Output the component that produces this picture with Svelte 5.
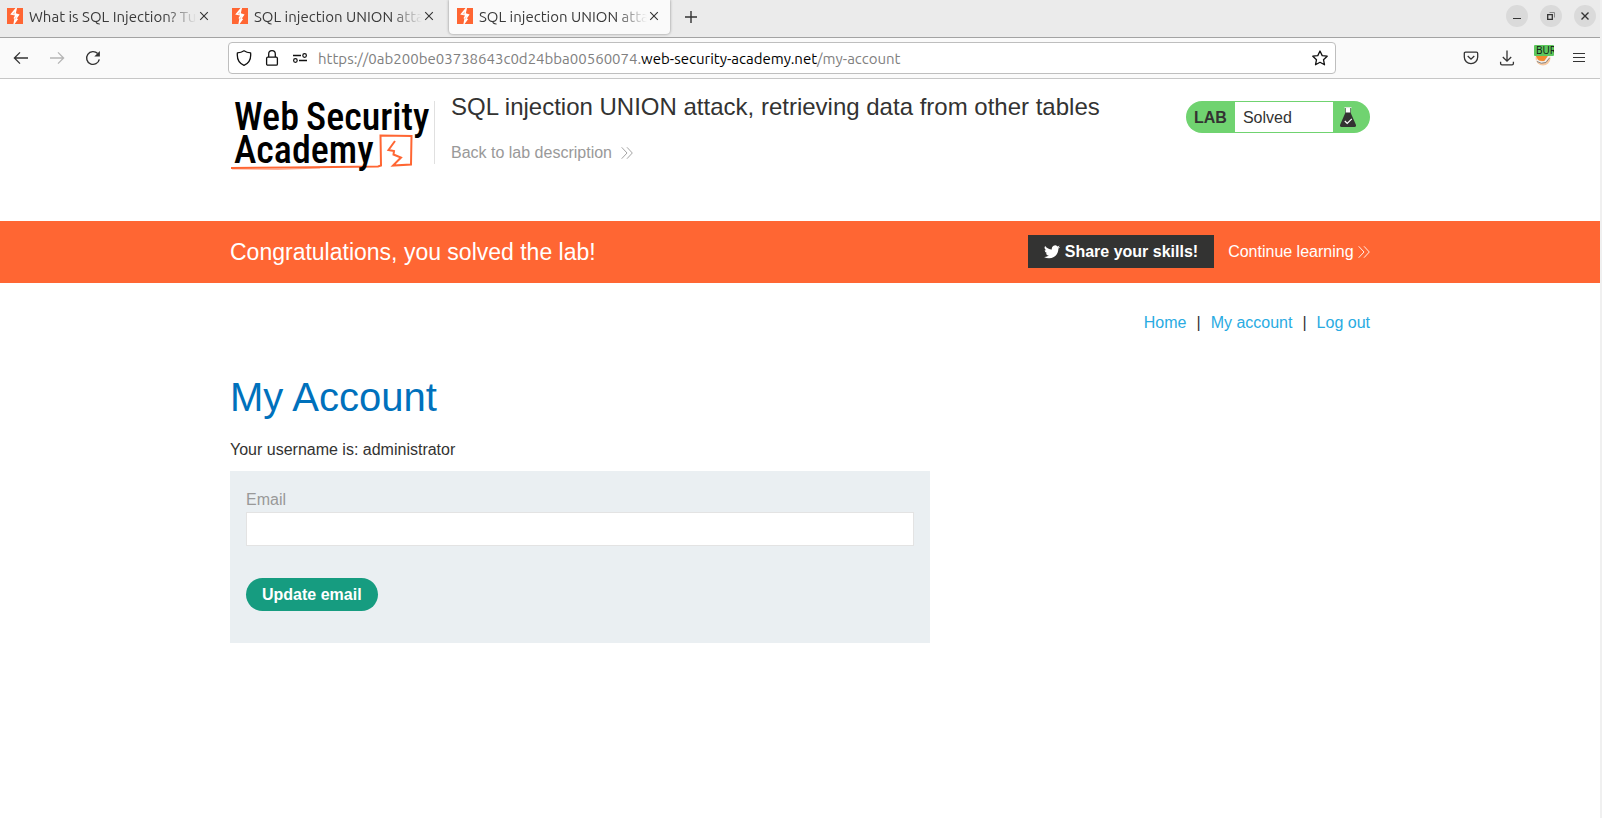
<script>
  const tabs = [
    { title: 'What is SQL Injection? Tutorial', active: false },
    { title: 'SQL injection UNION attack', active: false },
    { title: 'SQL injection UNION attack', active: true }
  ];
  let email = $state('');
</script>

{#snippet chevrons()}
  <svg class="chevrons" width="12" height="12" viewBox="0 0 12 12" aria-hidden="true">
    <path d="M0.7 0.3 6 6 0.7 11.7M6 0.3 11.3 6 6 11.7" fill="none" stroke="currentColor" stroke-width="0.9" />
  </svg>
{/snippet}

<div class="window">
  <div class="tabbar">
    <div class="tabs">
      {#each tabs as tab}
        <div class="tab" class:active={tab.active}>
          <svg width="16" height="16" viewBox="0 0 16 16" aria-hidden="true">
            <rect width="16" height="16" fill="#ff6633" />
            <path d="M8.6 0H10L8.8 5.2 12.6 6.6 9.8 10.6 11.2 11 7.6 16H6.4L7.4 10.6 6.4 10.2 8 7.4 3.2 6.4Z" fill="#fff" />
            <path d="M5.4 5.9 8 3.6 7.4 6.6ZM8 10.2 9.4 8 8.8 11.8Z" fill="#ff6633" opacity=".4" />
          </svg>
          <span class="tab-title">{tab.title}</span>
          <button class="close" aria-label="Close tab">
            <svg width="10" height="10" viewBox="0 0 10 10"><path d="M1.2 1.2 8.8 8.8M8.8 1.2 1.2 8.8" stroke="#333" stroke-width="1.1" /></svg>
          </button>
        </div>
      {/each}
      <button class="newtab" aria-label="New tab">
        <svg width="14" height="14" viewBox="0 0 14 14"><path d="M7 1V13M1 7H13" stroke="#333" stroke-width="1.4" /></svg>
      </button>
    </div>
    <div class="controls">
      <button aria-label="Minimize"><svg width="22" height="22" viewBox="0 0 22 22"><path d="M7 13.5H15" stroke="#333" /></svg></button>
      <button aria-label="Restore"><svg width="22" height="22" viewBox="0 0 22 22"><path d="M7.7 9.7H12.3V14.3H7.7Z" fill="none" stroke="#333" stroke-width="1.3" /><path d="M9.5 7.5H14.5V12.5" fill="none" stroke="#888" /></svg></button>
      <button aria-label="Close"><svg width="22" height="22" viewBox="0 0 22 22"><path d="M7.5 7.5 14.5 14.5M14.5 7.5 7.5 14.5" stroke="#333" stroke-width="1.4" /></svg></button>
    </div>
  </div>

  <div class="toolbar">
    <div class="nav-buttons">
      <button aria-label="Back"><svg width="16" height="16" viewBox="0 0 16 16"><path d="M15 8H1.5M7 2.4 1.4 8 7 13.6" fill="none" stroke="#333" stroke-width="1.3" /></svg></button>
      <button aria-label="Forward" disabled><svg width="16" height="16" viewBox="0 0 16 16"><path d="M1 8H14.5M9 2.4 14.6 8 9 13.6" fill="none" stroke="#b5b5b5" stroke-width="1.3" /></svg></button>
      <button aria-label="Reload"><svg width="16" height="16" viewBox="0 0 16 16"><path d="M14.3 9.3A6.4 6.4 0 1 1 12.7 3.6" fill="none" stroke="#333" stroke-width="1.4" /><path d="M14.9 1V6.6H9.3Z" fill="#333" /></svg></button>
    </div>
    <div class="urlbar">
      <svg width="16" height="16" viewBox="0 0 16 16" aria-hidden="true"><path d="M8 .8C10 2.2 12.3 2.8 14.6 2.9 15.2 8.5 12.8 13.3 8 15.3 3.2 13.3 .8 8.5 1.4 2.9 3.7 2.8 6 2.2 8 .8Z" fill="none" stroke="#111" stroke-width="1.3" stroke-linejoin="round" /></svg>
      <svg width="16" height="16" viewBox="0 0 16 16" aria-hidden="true"><rect x="2.6" y="7.2" width="10.8" height="8" rx="1.2" fill="none" stroke="#111" stroke-width="1.3" /><path d="M4.7 7V4A3.3 3.3 0 0 1 11.3 4V7" fill="none" stroke="#111" stroke-width="1.3" /></svg>
      <svg width="16" height="16" viewBox="0 0 16 16" aria-hidden="true"><path d="M1 5.5H9M7 10.5H15" stroke="#111" stroke-width="1.3" /><circle cx="12.6" cy="5.5" r="1.8" fill="none" stroke="#111" stroke-width="1.2" /><circle cx="3.4" cy="10.5" r="1.8" fill="none" stroke="#111" stroke-width="1.2" /></svg>
      <span class="url">https://0ab200be03738643c0d24bba00560074.<b>web-security-academy.net</b>/my-account</span>
      <button aria-label="Bookmark this page"><svg width="16" height="16" viewBox="0 0 16 16"><path d="M8 1 10.2 5.6 15.2 6.2 11.5 9.7 12.5 14.8 8 12.3 3.5 14.8 4.5 9.7 .8 6.2 5.8 5.6Z" fill="none" stroke="#111" stroke-width="1.3" stroke-linejoin="round" /></svg></button>
    </div>
    <div class="tools">
      <button aria-label="Save to Pocket"><svg width="16" height="16" viewBox="0 0 16 16"><path d="M2.6 2.2H13.4Q14.7 2.2 14.7 3.5V7A6.7 6.7 0 0 1 1.3 7V3.5Q1.3 2.2 2.6 2.2Z" fill="none" stroke="#333" stroke-width="1.3" /><path d="M4.7 6 8 9.2 11.3 6" fill="none" stroke="#333" stroke-width="1.3" /></svg></button>
      <button aria-label="Downloads"><svg width="16" height="16" viewBox="0 0 16 16"><path d="M8 .5V11M3.8 7 8 11.2 12.2 7M1.6 11.8V13.4Q1.6 14.8 3 14.8H13Q14.4 14.8 14.4 13.4V11.8" fill="none" stroke="#333" stroke-width="1.3" /></svg></button>
      <button class="proxy" aria-label="Proxy switcher">
        <svg width="18" height="18" viewBox="0 0 18 18"><circle cx="9" cy="9" r="7.5" fill="#f8c9a0" /><path d="M2 7 9 5.5 15 8 12 12.500 4.500 11.500Z" fill="#f28a2e" /><path d="M2.500 11Q6 14.500 11 12.500L15.500 6.500" fill="none" stroke="#eee" stroke-width="1.8" /><path d="M3 12.500Q7 15.500 12 13.500L15.500 9" fill="none" stroke="#8b8580" /></svg>
        <span class="badge">BUR</span>
      </button>
      <button aria-label="Menu"><svg width="16" height="16" viewBox="0 0 16 16"><path d="M2 3.5H14M2 7.5H14M2 11.5H14" stroke="#333" stroke-width="1.2" /></svg></button>
    </div>
  </div>

  <main>
    <header class="container lab-header">
      <svg class="logo" width="204" height="76" viewBox="0 0 204 76" role="img" aria-label="Web Security Academy">
        <path d="M1 67 60 66.5 148 65.5 151 64.5 150.500 34.500 181.500 35 181 63.500 163 64.500 171 56.500 163.500 53.500 164 50 158.500 49 165 40" fill="none" stroke="#ff6633" stroke-width="2" />
        <path d="M2 68 48 68.500 90 67" fill="none" stroke="#ff6633" stroke-opacity=".5" />
        <g class="logo-text">
          <text x="4" y="29">Web</text>
          <text x="76" y="29">Security</text>
          <text x="4" y="62">Academy</text>
        </g>
      </svg>
      <div class="lab-title">
        <h2>SQL injection UNION attack, retrieving data from other tables</h2>
        <a class="back" href="#lab">Back to lab description {@render chevrons()}</a>
      </div>
      <div class="status">
        <strong>LAB</strong>
        <span>Solved</span>
        <svg width="16" height="20" viewBox="0 0 16 20" aria-hidden="true">
          <path d="M5.5 1H10.5V6H5.5Z" fill="#fff" />
          <path d="M4.5 .7H11.5" stroke="#eee" />
          <path d="M5.5 1V6M10.5 1V6" stroke="#555" stroke-width=".7" />
          <path d="M5.5 5.5H10.5L16 18Q16.2 20 14.5 20H1.5Q-.2 20 0 18Z" fill="#333332" />
          <path d="M4.8 14 7.2 16.4 11.8 11.8" fill="none" stroke="#fff" stroke-width="1.2" />
        </svg>
      </div>
    </header>

    <section class="banner">
      <div class="container banner-inner">
        <h4>Congratulations, you solved the lab!</h4>
        <button class="share">
          <svg width="16" height="14" viewBox="0 0 24 20" aria-hidden="true"><path d="M24 2.37a9.8 9.8 0 0 1-2.83.78A4.93 4.93 0 0 0 23.34.42a9.9 9.9 0 0 1-3.13 1.2 4.92 4.92 0 0 0-8.38 4.48A13.98 13.98 0 0 1 1.67.95a4.92 4.92 0 0 0 1.52 6.57A4.9 4.9 0 0 1 .96 6.9a4.93 4.93 0 0 0 3.95 4.89 4.9 4.9 0 0 1-2.22.08 4.93 4.93 0 0 0 4.6 3.42A9.87 9.87 0 0 1 0 17.33a13.94 13.94 0 0 0 7.55 2.21c9.05 0 14-7.5 14-14v-.64A10 10 0 0 0 24 2.37z" fill="#fff" /></svg>
          Share your skills!
        </button>
        <a class="continue" href="#continue">Continue learning {@render chevrons()}</a>
      </div>
    </section>

    <div class="container">
      <nav class="links">
        <a href="#home">Home</a><span>|</span><a href="#account">My account</a><span>|</span><a href="#logout">Log out</a>
      </nav>
      <h1>My Account</h1>
      <p>Your username is: administrator</p>
      <form onsubmit={(e) => e.preventDefault()}>
        <label for="email">Email</label>
        <input id="email" type="email" bind:value={email} />
        <button type="submit">Update email</button>
      </form>
    </div>
  </main>
</div>

<style>
  :global(body) {
    margin: 0;
    background: #fff;
  }
  .window {
    box-sizing: border-box;
    min-height: 100vh;
    border-right: 2px solid #f0f0f0;
    font-family: "Liberation Sans", Arial, sans-serif;
    font-size: 16px;
    line-height: 20px;
    color: #333332;
  }
  button {
    border: 0;
    padding: 0;
    background: none;
    font: inherit;
    color: inherit;
    display: flex;
    align-items: center;
    justify-content: center;
  }
  svg {
    flex: none;
  }
  a {
    text-decoration: none;
  }
  .tabbar {
    display: flex;
    justify-content: space-between;
    height: 37px;
    background: #ebebeb;
    border-bottom: 1px solid #a3a3a3;
    font-family: Ubuntu, "Noto Sans", sans-serif;
    font-size: 15px;
  }
  .tabs {
    display: flex;
    gap: 4px;
    margin-left: -1px;
  }
  .tab {
    box-sizing: border-box;
    display: flex;
    align-items: center;
    width: 221px;
    height: 34px;
    padding: 0 9px 2px 8px;
    border-radius: 0 0 4px 4px;
  }
  .tab.active {
    background: #fafafa;
    box-shadow: 0 0 3px #888;
  }
  .tab-title {
    flex: 1;
    min-width: 0;
    margin-left: 6px;
    padding-top: 2px;
    overflow: hidden;
    white-space: nowrap;
    color: #3a3a3a;
    mask-image: linear-gradient(to left, transparent, #000 32px);
  }
  .close {
    width: 14px;
    height: 16px;
  }
  .newtab {
    width: 34px;
    height: 33px;
  }
  .controls {
    display: flex;
    align-items: center;
    gap: 12px;
    padding: 0 4px 5px 0;
  }
  .controls button {
    width: 22px;
    height: 22px;
    border-radius: 50%;
    background: #dadada;
  }
  .toolbar {
    display: flex;
    align-items: center;
    height: 40px;
    background: #fafafa;
    border-bottom: 1px solid #c6c6c6;
  }
  .nav-buttons {
    display: flex;
    gap: 20px;
    flex: 0 0 215px;
    padding-left: 13px;
  }
  .urlbar {
    box-sizing: border-box;
    display: flex;
    align-items: center;
    flex: 1;
    gap: 12px;
    height: 32px;
    padding: 0 7px;
    background: #fff;
    border: 1px solid #bebebe;
    border-radius: 4px;
    font-family: Ubuntu, "Noto Sans", sans-serif;
    font-size: 15px;
  }
  .url {
    flex: 1;
    margin-left: -2px;
    padding-top: 2px;
    color: #808080;
    white-space: nowrap;
  }
  .url b {
    font-weight: 400;
    color: #000;
  }
  .tools {
    display: flex;
    align-items: center;
    justify-content: flex-end;
    gap: 20px;
    flex: 0 0 251px;
    padding-right: 13px;
  }
  .proxy {
    position: relative;
    width: 16px;
  }
  .badge {
    position: absolute;
    left: -1px;
    top: -4px;
    width: 20px;
    height: 11px;
    overflow: hidden;
    background: #5dc75d;
    border-radius: 1px;
    color: #111;
    font: 10px/11px "Open Sans", sans-serif;
    text-indent: 2px;
    text-align: left;
  }
  .container {
    width: min(1140px, 100% - 32px);
    margin: 0 auto;
  }
  .lab-header {
    display: flex;
    align-items: flex-start;
    height: 120px;
    padding-top: 22px;
  }
  .logo-text {
    font-family: "Roboto Condensed", "Ubuntu Condensed", "Liberation Sans Narrow", Roboto, sans-serif;
    font-size: 38px;
    font-weight: 500;
    fill: #000;
  }
  .lab-title {
    flex: 1;
    height: 63px;
    padding-left: 16px;
    border-left: 1px solid #e0e0e0;
  }
  h2 {
    margin: -8px 0 22px;
    font-size: 24px;
    line-height: 28px;
    font-weight: 400;
  }
  .back {
    color: #999;
  }
  .back .chevrons {
    margin-left: 5px;
  }
  .chevrons {
    vertical-align: -1px;
  }
  .status {
    box-sizing: border-box;
    display: flex;
    align-items: center;
    width: 184px;
    height: 32px;
    padding: 1px 14px 1px 8px;
    border-radius: 16px;
    background: #70d370;
  }
  .status strong {
    padding-top: 2px;
  }
  .status span {
    flex: 1;
    margin: 0 7px 0 8px;
    padding: 2px 0 0 8px;
    background: #fff;
    line-height: 28px;
  }
  .banner {
    background: #ff6633;
    color: #fff;
  }
  .banner-inner {
    display: flex;
    align-items: center;
    height: 62px;
  }
  h4 {
    flex: 1;
    margin: 0;
    font-size: 23px;
    line-height: 28px;
    font-weight: 400;
  }
  .share {
    gap: 5px;
    height: 33px;
    padding: 0 16px;
    margin: 0 14px 1px 0;
    background: #333332;
    font-weight: 700;
  }
  .continue {
    color: #fff;
  }
  .links {
    display: flex;
    justify-content: flex-end;
    gap: 10px;
    padding-top: 30px;
  }
  .links a {
    color: #29abe2;
  }
  h1 {
    margin: 40px 0 19px;
    font-size: 40px;
    line-height: 48px;
    font-weight: 400;
    color: #0071bc;
  }
  p {
    margin: 0 0 11px;
  }
  form {
    box-sizing: border-box;
    max-width: 700px;
    padding: 19px 16px 32px;
    background: #eaeff2;
  }
  label {
    display: block;
    margin-bottom: 2px;
    color: #999;
  }
  input {
    box-sizing: border-box;
    display: block;
    width: 100%;
    height: 34px;
    margin-bottom: 32px;
    padding: 0 8px;
    border: 1px solid #e3e3e3;
    background: #fff;
    font: inherit;
  }
  form button {
    height: 33px;
    padding: 0 16px;
    border-radius: 17px;
    background: #169c80;
    color: #fff;
    font-weight: 700;
  }
</style>
